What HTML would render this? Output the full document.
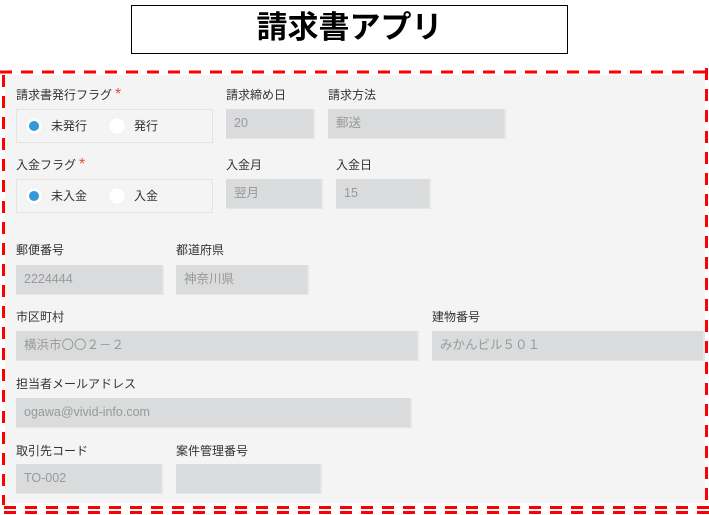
<!DOCTYPE html>
<html><head><meta charset="utf-8"><style>
*{margin:0;padding:0;box-sizing:border-box}
body{width:709px;height:515px;background:#fff;position:relative;overflow:hidden;font-family:"Liberation Sans","Noto Sans CJK JP",sans-serif}
.t{position:absolute;left:131px;top:5px;width:437px;height:49px;border:1.5px solid #000;text-align:center;font-weight:bold;font-size:31px;line-height:44px;color:#000}
.panel{position:absolute;left:5px;top:75px;width:700px;height:428px;background:#f4f4f4}
.l{position:absolute;font-size:12px;color:#333;line-height:14px}
.l b{color:#e74c3c;font-weight:normal;margin-left:3px;font-size:16px;line-height:10px}
.i{position:absolute;background:#dadbdc;border-right:2px solid #e6e6e6;border-bottom:1px solid #e6e6e6;font-size:12.5px;color:#999;padding-left:8px;line-height:29px;height:30px}
.r{position:absolute;border:1px solid #e3e3e3;width:197px;height:34px;font-size:12px;color:#333}
.r .d{position:absolute;top:8px;width:16px;height:16px;border-radius:50%;background:#fff;box-shadow:0 0 1px #ddd}
.r .d.on::after{content:"";position:absolute;left:3px;top:3px;width:10px;height:10px;border-radius:50%;background:#3498db}
.r span{position:absolute;top:7px}
</style></head><body>
<div class="t">請求書アプリ</div>
<div class="panel"></div>
<svg width="709" height="515" style="position:absolute;left:0;top:0">
<line x1="0" y1="72" x2="709" y2="72" stroke="#f00" stroke-width="3" stroke-dasharray="12 9"/>
<line x1="3.5" y1="75" x2="3.5" y2="505" stroke="#f00" stroke-width="3" stroke-dasharray="12 9"/>
<line x1="706.5" y1="68" x2="706.5" y2="505" stroke="#f00" stroke-width="3" stroke-dasharray="12 9"/>
<line x1="4" y1="507.5" x2="709" y2="507.5" stroke="#f00" stroke-width="3" stroke-dasharray="12 9"/>
<line x1="4" y1="512.5" x2="709" y2="512.5" stroke="#f00" stroke-width="3" stroke-dasharray="12 9"/>
</svg>
<div class="l" style="left:16px;top:88px">請求書発行フラグ<b>*</b></div>
<div class="r" style="left:16px;top:109px"><div class="d on" style="left:9px"></div><span style="left:34px">未発行</span><div class="d" style="left:92px"></div><span style="left:117px">発行</span></div>
<div class="l" style="left:226px;top:88px">請求締め日</div>
<div class="i" style="left:226px;top:109px;width:89px">20</div>
<div class="l" style="left:328px;top:88px">請求方法</div>
<div class="i" style="left:328px;top:109px;width:178px">郵送</div>

<div class="l" style="left:16px;top:158px">入金フラグ<b>*</b></div>
<div class="r" style="left:16px;top:179px"><div class="d on" style="left:9px"></div><span style="left:34px">未入金</span><div class="d" style="left:92px"></div><span style="left:117px">入金</span></div>
<div class="l" style="left:226px;top:158px">入金月</div>
<div class="i" style="left:226px;top:179px;width:97px">翌月</div>
<div class="l" style="left:336px;top:158px">入金日</div>
<div class="i" style="left:336px;top:179px;width:95px">15</div>

<div class="l" style="left:16px;top:243px">郵便番号</div>
<div class="i" style="left:16px;top:265px;width:148px">2224444</div>
<div class="l" style="left:176px;top:243px">都道府県</div>
<div class="i" style="left:176px;top:265px;width:133px">神奈川県</div>

<div class="l" style="left:16px;top:310px">市区町村</div>
<div class="i" style="left:16px;top:331px;width:403px">横浜市〇〇２－２</div>
<div class="l" style="left:432px;top:310px">建物番号</div>
<div class="i" style="left:432px;top:331px;width:273px">みかんビル５０１</div>

<div class="l" style="left:16px;top:377px">担当者メールアドレス</div>
<div class="i" style="left:16px;top:398px;width:396px">ogawa@vivid-info.com</div>

<div class="l" style="left:16px;top:444px">取引先コード</div>
<div class="i" style="left:16px;top:464px;width:147px">TO-002</div>
<div class="l" style="left:176px;top:444px">案件管理番号</div>
<div class="i" style="left:176px;top:464px;width:146px"></div>
</body></html>
